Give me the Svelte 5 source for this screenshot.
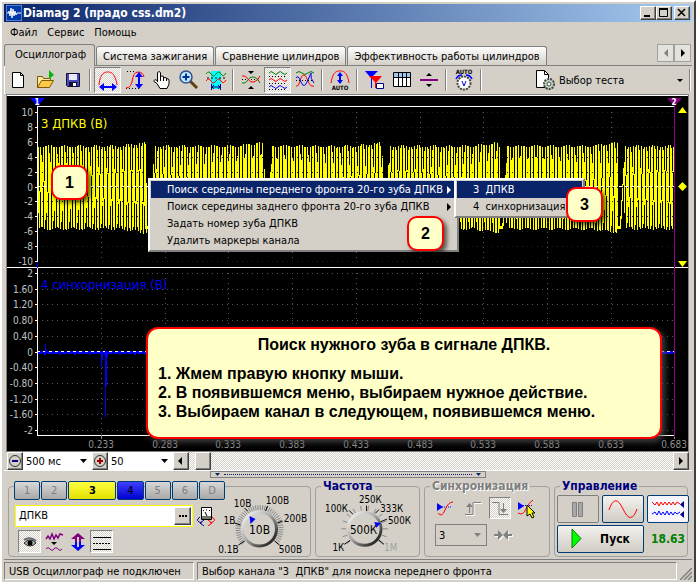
<script>
  const tabs = ['Осциллограф', 'Система зажигания', 'Сравнение цилиндров', 'Эффективность работы цилиндров'];
  let activeTab = $state(0);

  const channels = [
    { id: '1' },
    { id: '2' },
    { id: '3', kind: 'yellow' },
    { id: '4', kind: 'blue' },
    { id: '5' },
    { id: '6' },
    { id: 'D' }
  ];

  const menuItems = [
    { text: 'Поиск середины переднего фронта 20-го зуба ДПКВ', sub: true, active: true },
    { text: 'Поиск середины заднего фронта 20-го зуба ДПКВ', sub: true },
    { text: 'Задать номер зуба ДПКВ' },
    { text: 'Удалить маркеры канала' }
  ];
  const subItems = [{ text: '3  ДПКВ', active: true }, { text: '4  синхорнизация' }];

  let channelName = $state('ДПКВ');
  let volts = $state(2);
  let freq = $state(4);

  // plot geometry
  const left = 37;
  const right = 674;
  const times = ['0.233', '0.283', '0.333', '0.383', '0.433', '0.483', '0.533', '0.583', '0.633', '0.683'];
  const timeX = (i) => Math.round(101 + i * 63.7);

  const axis1 = [10, 8, 6, 4, 2, 0, -2, -4, -6, -8, -10].map((v, i) => ({ v, y: Math.round(112 + i * 14.9) }));
  const axis2 = ['2', '1.60', '1.20', '0.80', '0.40', '0', '-0.40', '-0.80', '-1.20', '-1.60', '-2'].map((v, i) => ({
    v,
    y: Math.round(273 + i * 15.7)
  }));

  // crankshaft sensor: dense teeth with a gap every 117.6 px
  function crank(x) {
    const p = (((x - 147) % 117.6) + 117.6) % 117.6;
    if (p < 3) return -1;
    if (p < 7) return -1 + (p - 3) * 0.4;
    const amp = 1 + (p > 90 ? (p - 90) / 300 : 0) + 0.03 * Math.sin(p * 0.4);
    return amp * Math.sin((2 * Math.PI * x) / 2.67);
  }

  let crankPath = '';
  for (let x = left + 1; x < right; x++) {
    let min = 2;
    let max = -2;
    for (let s = 0; s <= 8; s++) {
      const v = crank(x + s / 8);
      min = Math.min(min, v);
      max = Math.max(max, v);
    }
    crankPath += `M${x + 0.5} ${Math.round(186 - max * 40)}V${Math.round(187 - min * 42)}`;
  }

  let syncPath = 'M37 352';
  for (let x = 38; x <= right; x++) {
    syncPath += `L${x} ${352 + ((x * 7) % 3 === 0 ? 1 : 0) + (x % 5 === 0 ? 1 : 0)}`;
  }

  // knob ticks around a centre
  function ticks(cx, cy, r1, r2, step) {
    let d = '';
    for (let a = -220; a <= 40; a += step) {
      const t = (a * Math.PI) / 180;
      d += `M${cx + r1 * Math.cos(t)} ${cy + r1 * Math.sin(t)}L${cx + r2 * Math.cos(t)} ${cy + r2 * Math.sin(t)}`;
    }
    return d;
  }
</script>

<div class="window">
  <header class="titlebar">
    <svg class="logo" viewBox="0 0 16 16" width="16" height="16">
      <rect width="16" height="16" fill="#0038a8" stroke="#9cc4f8" />
      <path d="M1 8h2v-2l1 5 1-8 1 10 1-9 1 7 1-5 1 4 1-2h4" fill="none" stroke="#fff" />
    </svg>
    <h1>Diamag 2 (прадо css.dm2)</h1>
    <button class="win" aria-label="Свернуть"><svg viewBox="0 0 12 10" width="12" height="10"><path d="M2 8h6" stroke="#000" stroke-width="2" /></svg></button>
    <button class="win" aria-label="Развернуть"><svg viewBox="0 0 12 10" width="12" height="10"><path d="M1.500 1v7.500h8V1M1 1h9" fill="none" stroke="#000" /><path d="M1 1h9" stroke="#000" stroke-width="2" /></svg></button>
    <button class="win close" aria-label="Закрыть"><svg viewBox="0 0 12 10" width="12" height="10"><path d="M2 1l7 7M9 1l-7 7" stroke="#000" stroke-width="1.600" /></svg></button>
  </header>

  <nav class="menubar">
    <button>Файл</button>
    <button>Сервис</button>
    <button>Помощь</button>
  </nav>

  <div class="tabs">
    {#each tabs as tab, i}
      <button class="tab" class:active={activeTab === i} onclick={() => (activeTab = i)}>{tab}</button>
    {/each}
    <span class="fill"></span>
    <div class="tab-nav">
      <button aria-label="Назад"><svg viewBox="0 0 8 8" width="8" height="8"><path d="M6 0v8L2 4z" fill="#808080" /></svg></button>
      <button aria-label="Вперёд"><svg viewBox="0 0 8 8" width="8" height="8"><path d="M2 0v8l4-4z" /></svg></button>
    </div>
  </div>

  <div class="toolbar">
    <button aria-label="Новый"><svg viewBox="0 0 24 24"><path d="M5.500 4.500h8l3 3v12h-11z" fill="#fff" stroke="#000" /><path d="M13.500 4.500v3h3" fill="none" stroke="#000" /></svg></button>
    <button aria-label="Открыть"><svg viewBox="0 0 24 24"><path d="M3.500 19.500v-11h5l1 2h7v3" fill="#ffe9a0" stroke="#7a5a00" /><path d="M3.500 19.500l4-7h12l-4 7z" fill="#ffc84a" stroke="#7a5a00" /><path d="M15 2v9l5-4z" fill="#00b800" /></svg></button>
    <button aria-label="Сохранить"><svg viewBox="0 0 24 24"><path d="M5.500 5.500h13v13h-12l-1-1z" fill="#4848b8" stroke="#101040" /><path d="M8 6h8v6H8z" fill="#e8e8f8" /><path d="M8 14h8v4H8z" fill="#101030" /><path d="M12 15h3v3h-3z" fill="#fff" /></svg></button>
    <span class="sep"></span>
    <button class="pressed" aria-label="Период"><svg viewBox="0 0 24 24"><path d="M3 17C4 4 10 4 12 4s7 0 9 13" fill="none" stroke="red" /><path d="M6 19h12" stroke="#00f" stroke-width="2" /><path d="M3 19l5-4v8zM21 19l-5-4v8z" fill="#00f" /></svg></button>
    <button aria-label="Размах"><svg viewBox="0 0 24 24"><path d="M4 3.500h9M3 20.500h13" stroke="#000" stroke-dasharray="1 2" /><path d="M3 20c9 0 4-16 12-16q5 0 6 5" fill="none" stroke="red" /><path d="M16 6v12" stroke="#00f" stroke-width="2" /><path d="M16 4l-4 5h8zM16 21l-4-5h8z" fill="#00f" /></svg></button>
    <button aria-label="Рука"><svg viewBox="0 0 24 24"><path d="M7.500 14V4.500q1.500-2 3 0V10V8.500q1.500-1 3 0V10q1.500-1 3 0v1q2-1 2.500 1v4l-2 4.500h-7l-3-5-3-2q0-3 3-1" fill="#fff" stroke="#000" /><path d="M10.500 10v3M13.500 10v3M16.500 11v2" stroke="#000" /></svg></button>
    <button aria-label="Масштаб"><svg viewBox="0 0 24 24"><path d="M13 13l7 7" stroke="#604010" stroke-width="3" /><circle cx="9" cy="9" r="6" fill="#c0e8ff" stroke="#305090" stroke-width="1.500" /><path d="M5.500 9h7M9 5.500v7" stroke="#003090" stroke-width="2" /></svg></button>
    <button aria-label="Участок"><svg viewBox="0 0 24 24"><path d="M7 3h10v18H7z" fill="#0ff" /><path d="M2 6q3-4 5 0t5 0 5 0 5-1" fill="none" stroke="#008000" /><path d="M3 10h18" stroke="#000" stroke-dasharray="2 2" /><path d="M2 13q3-4 5 0t5 0 5 0 5-1" fill="none" stroke="red" /><path d="M7.500 16v6M16.500 16v6M8 19h8M10 17l-2 2 2 2M14 17l2 2-2 2" fill="none" stroke="#008" /></svg></button>
    <span class="sep"></span>
    <button aria-label="Центр"><svg viewBox="0 0 24 24"><path d="M3 11.500h18" stroke="#000" stroke-dasharray="1 2" /><path d="M3 15q4 1 6-3t6-3 6 6" fill="none" stroke="#008000" /><path d="M3 8q4-1 6 3t6 3 6-6" fill="none" stroke="red" /><path d="M9 3h6l-3 3zM9 21h6l-3-3z" /></svg></button>
    <button class="pressed" aria-label="Раздельно"><svg viewBox="0 0 24 24"><path d="M3 5q2-3 4.500 0t4.500 0 4.500 0 4.500 0" fill="none" stroke="#008000" /><path d="M3 8.500h18M3 15.500h18M3 21.500h18" stroke="#000" stroke-dasharray="1 2" /><path d="M3 12q2-3 4.500 0t4.500 0 4.500 0 4.500 0" fill="none" stroke="red" /><path d="M3 19q2-3 4.500 0t4.500 0 4.500 0 4.500 0" fill="none" stroke="#00f" /></svg></button>
    <button aria-label="Вместе"><svg viewBox="0 0 24 24"><path d="M3 5q3-3 6 0t6 0 6 0" fill="none" stroke="#008000" /><path d="M3 18C7 20 7 6 11 7s4 13 10 11" fill="none" stroke="red" /><path d="M3 10q2-4 5 4t7-2 3-6 3 9" fill="none" stroke="#00f" /><path d="M3 12.500h18" stroke="#000" stroke-dasharray="1 2" /></svg></button>
    <span class="sep"></span>
    <button aria-label="Авто"><svg viewBox="0 0 24 24"><path d="M3 15C5 3 9 3 12 3s7 0 9 12" fill="none" stroke="red" /><path d="M12 7v7" stroke="#00f" stroke-width="2" /><path d="M12 4l-3 4h6zM12 16l-3-4h6z" fill="#00f" /><text x="12" y="22" class="auto">AUTO</text></svg></button>
    <span class="sep"></span>
    <button aria-label="Маркеры"><svg viewBox="0 0 24 24"><path d="M2 3h13L8 10z" fill="#00f" /><path d="M8.500 8v12" stroke="#00f" /><path d="M12.500 13v7" stroke="red" /><path d="M6 8h13l-6 7z" fill="red" /><path d="M13.500 15.500h7v5h-7z" fill="#fff" stroke="#008" /></svg></button>
    <button aria-label="Таблица"><svg viewBox="0 0 24 24"><path d="M3.500 4.500h17v14h-17z" fill="#fff" stroke="#000" /><path d="M4 5h16v4H4z" fill="#a0c8f0" /><path d="M3 9.500h18M8.500 5v14M12.500 5v14M16.500 5v14" stroke="#000" /></svg></button>
    <button aria-label="Линия"><svg viewBox="0 0 24 24"><path d="M3 12h18" stroke="#800080" stroke-width="2" /><path d="M9 8l3-3 3 3zM9 16l3 3 3-3z" /></svg></button>
    <span class="sep"></span>
    <button aria-label="Автонапряжение"><svg viewBox="0 0 24 24"><text x="12" y="6" class="auto">AUTO</text><circle cx="12" cy="15" r="6.500" fill="#fff" stroke="#444" stroke-width="2" stroke-dasharray="2 1" /><path d="M10 13l2 5 2-5" fill="none" stroke="#00f" /><path d="M4 11q2-4 6-4M20 11q-2-4-6-4" fill="none" stroke="#00f" stroke-width="1.500" /></svg></button>
    <span class="sep"></span>
    <span class="fill"></span>
    <button class="test">
      <svg viewBox="0 0 24 24"><path d="M3.500 2.500h8l4 4v13h-12z" fill="#fff" stroke="#000" /><path d="M11.500 2.500v4h4" fill="none" stroke="#000" /><circle cx="16" cy="16" r="5" fill="#c8d8c8" stroke="#404840" stroke-width="2" stroke-dasharray="2 1" /><circle cx="16" cy="16" r="2" fill="#fff" stroke="#404840" /></svg>
      <span>Выбор теста</span>
      <svg class="tri" viewBox="0 0 6 3" width="6" height="3"><path d="M0 0h6L3 3z" /></svg>
    </button>
    <span class="sep end"></span>
  </div>

  <main class="scope">
    <svg class="plot" viewBox="7 96 681 355" role="img" aria-label="Осциллограмма">
      <g class="grid">
        {#each [...axis1, ...axis2] as a}
          <path d="M42 {a.y + 0.5}H{right}" />
        {/each}
        {#each times as t, i}
          <path d="M{timeX(i) + 0.5} 112V262M{timeX(i) + 0.5} 273V435" />
        {/each}
      </g>
      <path class="crisp" d={crankPath} stroke="#ff0" fill="none" />
      <g class="grid over">
        {#each axis1 as a}
          <path d="M42 {a.y + 0.5}H{right}" />
        {/each}
      </g>
      <path class="crisp" d="M37 186.500H674M37 351.500H674" stroke="#fff" stroke-dasharray="3 3" />
      <path class="crisp" d={syncPath} stroke="#00f" stroke-width="2" fill="none" />
      <path class="crisp" d="M37 351.500H674" stroke="#fff" stroke-dasharray="3 3" />
      <path class="crisp" d="M45.500 344v9M44.500 349h2v4M101.500 352v15M102.500 352v8M105.500 350v67M106.500 352v34M107.500 352v5" stroke="#00f" fill="none" />
      <path class="crisp" d="M37 106.500H675M7 267.500H688M37 435.500H674M37.500 106V262M37.500 268V436" stroke="#fff" />
      <g class="labels">
        {#each axis1 as a}
          <text x="33" y={a.y + 4}>{a.v}</text>
          <path class="crisp" d="M35 {a.y + 0.5}h3" stroke="#fff" />
        {/each}
        {#each axis2 as a}
          <text x="33" y={a.y + 4}>{a.v}</text>
          <path class="crisp" d="M35 {a.y + 0.5}h3" stroke="#fff" />
        {/each}
      </g>
      {#each times as t, i}
        <text class="time" x={timeX(i)} y="448">{t}</text>
        <path class="crisp" d="M{timeX(i) + 0.5} 435v4" stroke="#888" />
      {/each}
      <path class="crisp" d="M37.500 100v6M37.500 262v6" stroke="#00f" />
      <path d="M30 98h15l-7.500 8z" fill="#00f" />
      <path class="crisp" d="M674.500 100V437" stroke="#900090" />
      <path d="M667 98h15l-7.500 8z" fill="#800080" />
      <text class="flag" x="37" y="105">1</text>
      <text class="flag" x="674" y="105">2</text>
      <path d="M678 113h9l-4.500-6zM678 261h9l-4.500 6zM682.500 182l4.500 4.500-4.500 4.500-4.500-4.500z" fill="#ff0" />
      <text class="name" x="41" y="128" fill="#ff0">3 ДПКВ (В)</text>
      <text class="name" x="41" y="289" fill="#00f">4 синхорнизация (В)</text>
    </svg>

    <ul class="context">
      {#each menuItems as item}
        <li>
          <button class:active={item.active}>
            <span>{item.text}</span>
            {#if item.sub}<svg viewBox="0 0 5 8" width="5" height="8"><path d="M0 0v8l4-4z" fill="currentColor" /></svg>{/if}
          </button>
        </li>
      {/each}
    </ul>
    <ul class="context submenu">
      {#each subItems as item}
        <li><button class:active={item.active}><span>{item.text}</span></button></li>
      {/each}
    </ul>

    <span class="badge one">1</span>
    <span class="badge two">2</span>
    <span class="badge three">3</span>

    <section class="note">
      <h2>Поиск нужного зуба в сигнале ДПКВ.</h2>
      <ol>
        <li>Жмем правую кнопку мыши.</li>
        <li>В появившемся меню, выбираем нужное действие.</li>
        <li>Выбираем канал в следующем, появившемся меню.</li>
      </ol>
    </section>
  </main>

  <div class="scrollrow">
    <button class="raised" aria-label="Меньше"><svg viewBox="0 0 14 14" width="14" height="14"><circle cx="7" cy="7" r="5.500" fill="none" stroke="#333" /><path d="M4 7h6" stroke="#000080" stroke-width="2" /></svg></button>
    <label class="combo"><select aria-label="Развёртка"><option>500 мс</option></select><svg viewBox="0 0 7 4" width="7" height="4"><path d="M0 0h7L3.500 4z" /></svg></label>
    <button class="raised" aria-label="Больше"><svg viewBox="0 0 14 14" width="14" height="14"><circle cx="7" cy="7" r="5.500" fill="none" stroke="#333" /><path d="M4 7h6M7 4v6" stroke="#a00000" stroke-width="2" /></svg></button>
    <label class="combo narrow"><select aria-label="Шаг"><option>50</option></select><svg viewBox="0 0 7 4" width="7" height="4"><path d="M0 0h7L3.500 4z" /></svg></label>
    <button class="raised" aria-label="Влево"><svg viewBox="0 0 8 8" width="8" height="8"><path d="M5 0v8L1 4z" /></svg></button>
    <div class="track"><span class="thumb"></span></div>
    <button class="raised" aria-label="Вправо"><svg viewBox="0 0 8 8" width="8" height="8"><path d="M2 0v8l4-4z" /></svg></button>
  </div>

  <div class="splitter">
    <button aria-label="Скрыть панель">
      <svg viewBox="0 0 5 3" width="5" height="3"><path d="M0 0h5L2.500 3z" fill="#0a246a" /></svg>
      <span class="dots"></span>
      <svg viewBox="0 0 5 3" width="5" height="3"><path d="M0 0h5L2.500 3z" fill="#0a246a" /></svg>
    </button>
  </div>

  <div class="panel">
    <section class="group channel">
      <div class="channels">
        {#each channels as ch}
          <button class={['ch', ch.kind]}>{ch.id}</button>
        {/each}
      </div>
      <div class="name-row">
        <div class="name-box">
          <input aria-label="Имя канала" bind:value={channelName} />
          <button class="raised" aria-label="Ещё"><svg viewBox="0 0 8 2" width="8" height="2"><path d="M0 1h2M3 1h2M6 1h2" stroke="#000" stroke-width="2" /></svg></button>
        </div>
        <button class="icon" aria-label="Прибор"><svg viewBox="0 0 20 20" width="20" height="20"><path d="M5.500 1.500h10v12h-10z" fill="#fff" stroke="#000" /><path d="M6 10h9v3H6z" fill="#707870" /><path d="M7 5l1-1M10 4h1M13 4l1 1M9 6l2 4" stroke="#000" /><path d="M4 11q-6 4 2 6M8 14l-4 3 4 3" fill="none" stroke="#008" /><path d="M16 11q6 4-2 6M12 14l4 3-4 3" fill="none" stroke="red" /></svg></button>
      </div>
      <div class="view-row">
        <button class="pressed" aria-label="Показать"><svg viewBox="0 0 22 22" width="22" height="22"><path d="M5 12q6-6 12 0-6 6-12 0z" fill="#b8c0b8" stroke="#222" /><circle cx="11" cy="12" r="2.500" /><path d="M5 9q6-4 12 1" fill="none" stroke="#667" stroke-width="2" /></svg></button>
        <button aria-label="Фильтр"><svg viewBox="0 0 22 22" width="22" height="22"><path d="M3 8l2-3 2 3 2-5 2 5 2-4 2 3 2-4 3 1" fill="none" stroke="#800080" stroke-width="1.500" /><path d="M8 11h6l-3 3z" /><path d="M3 18q2-3 4 0t4 0 4 0 4 0" fill="none" stroke="#800080" /></svg></button>
        <button aria-label="Инверсия"><svg viewBox="0 0 22 22" width="22" height="22"><path d="M11 2l7 6h-4v3H8V8H4z" fill="#800080" /><path d="M11 20l7-6h-4v-3H8v3H4z" fill="#00f" /><path d="M11 6v10" stroke="#d4d0c8" stroke-width="2" /></svg></button>
        <button class="pressed" aria-label="Уровни"><svg viewBox="0 0 22 22" width="22" height="22"><path d="M2 6.500h18M2 18.500h18" stroke="#000" /><path d="M2 12.500h18" stroke="#000" stroke-dasharray="2 1" /></svg></button>
      </div>
      <label class="knob">
        <input type="range" min="0" max="5" bind:value={volts} aria-label="Вольты" />
        <svg viewBox="218 494 90 62">
          <path d={ticks(260, 529, 19, 24, 6)} stroke="#888" />
          <path d="M245 541l-6 4M241 525l-6-2M248 511l-3-3M266 511l2-5M278 523l5-2M275 541l5 4" stroke="#000" />
          <circle cx="260" cy="529" r="17" fill="#d4d0c8" stroke="url(#rim)" stroke-width="3" />
          <path d="M250 516l6 3-5 5z" fill="#00f" />
          <text class="center" x="260" y="534">10В</text>
          <g class="scale">
            <text x="243" y="507">10В</text>
            <text x="278" y="504">100В</text>
            <text x="296" y="522">200В</text>
            <text x="291" y="553">500В</text>
            <text x="229" y="553">0.1В</text>
            <text x="230" y="524">1В</text>
          </g>
        </svg>
      </label>
    </section>

    <fieldset class="group">
      <legend>Частота</legend>
      <label class="knob">
        <input type="range" min="0" max="5" bind:value={freq} aria-label="Частота" />
        <svg viewBox="318 491 98 64">
          <defs>
            <linearGradient id="rim" x1="0" y1="0" x2="1" y2="1">
              <stop offset="0" stop-color="#fff" />
              <stop offset="0.450" stop-color="#aaa" />
              <stop offset="1" stop-color="#000" />
            </linearGradient>
          </defs>
          <path d={ticks(364, 529, 19, 24, 20)} stroke="#888" />
          <path d="M349 541l-6 4M352 514l-4-4M366 511v-6M375 513l4-4M380 522l7-3M378 540l6 5" stroke="#000" />
          <circle cx="364" cy="529" r="17" fill="#d4d0c8" stroke="url(#rim)" stroke-width="3" />
          <path d="M374 522l7 1-5 5z" fill="#00f" />
          <text class="center" x="363" y="534">500К</text>
          <g class="scale">
            <text x="335" y="512">100К</text>
            <text x="370" y="502">250К</text>
            <text x="392" y="512">333К</text>
            <text x="400" y="524">500К</text>
            <text x="391" y="552" class="dim">1М</text>
            <text x="337" y="552">1К</text>
          </g>
        </svg>
      </label>
    </fieldset>

    <fieldset class="group sync">
      <legend>Синхронизация</legend>
      <div class="row">
        <button class="icon" aria-label="Уровень"><svg viewBox="0 0 22 22" width="22" height="22"><path d="M2 6v8l6-4z" fill="#00f" /><path d="M7 10h9" stroke="#00f" stroke-dasharray="1 1" /><path d="M3 16q4 5 7-3t8-8" fill="none" stroke="red" /></svg></button>
        <button class="icon" aria-label="Передний фронт"><svg viewBox="0 0 22 22" width="22" height="22"><path d="M3 17.500h8v-12h8" fill="none" stroke="#fff" transform="translate(1 1)" /><path d="M3 17.500h8v-12h8M7.500 16V8" fill="none" stroke="#808080" /><path d="M4 10h7L7.500 6z" fill="#808080" /></svg></button>
        <button class="icon pressed" aria-label="Задний фронт"><svg viewBox="0 0 22 22" width="22" height="22"><path d="M3 5.500h7v12h9M14.500 6v8" fill="none" stroke="#808080" /><path d="M11 12h7l-3.500 4z" fill="#808080" /></svg></button>
        <button class="icon" aria-label="Указать"><svg viewBox="0 0 22 22" width="22" height="22"><path d="M2 5v8l6-4z" fill="#00f" /><path d="M7 8.500h10" stroke="#00f" stroke-dasharray="1 1" /><path d="M2 16q5 3 8-4t7-9" fill="none" stroke="red" /><path d="M11 8v11l3-2 2 4 2-1-2-4h3z" fill="#ff0" stroke="#000" /></svg></button>
      </div>
      <div class="row second">
        <label class="combo disabled"><select aria-label="Канал" disabled><option>3</option></select><svg viewBox="0 0 7 4" width="7" height="4"><path d="M0 0h7L3.500 4z" fill="#808080" /></svg></label>
        <button class="icon" aria-label="Сжать"><svg viewBox="0 0 20 12" width="20" height="12"><path d="M1 5h4V1l5 5 5-5v4h4v2h-4v4l-5-5-5 5V7H1z" fill="#fff" transform="translate(1 1)" /><path d="M1 5h4V1l5 5 5-5v4h4v2h-4v4l-5-5-5 5V7H1z" fill="#808080" /></svg></button>
      </div>
    </fieldset>

    <fieldset class="group control">
      <legend>Управление</legend>
      <button class="big off" aria-label="Пауза"><svg viewBox="0 0 40 26"><path d="M14.500 6.500h4v14h-4zM20.500 6.500h4v14h-4z" fill="#a8a8a8" stroke="#808080" /></svg></button>
      <button class="big" aria-label="Синус"><svg viewBox="0 0 40 26"><path d="M6 14Q12-4 20 13T34 13" fill="none" stroke="red" /></svg></button>
      <button class="big on" aria-label="Сигналы"><svg viewBox="0 0 40 26"><path d="M4 6l3 3 2-3 2 4 2-4 2 3 2-3 2 3 2-3 2 3 2-3 2 3 2-3 3 2" fill="none" stroke="red" /><path d="M4 18l3-2 2 3 2-4 2 4 2-3 2 3 2-4 2 4 2-3 2 3 2-3 2 2 3-2" fill="none" stroke="#00f" /><path d="M36 5v7l-4-3.500zM36 15v7l-4-3.500z" fill="#008" /></svg></button>
      <button class="big start"><svg viewBox="0 0 11 20" width="11" height="20"><path d="M1 0v19l9-9.500z" fill="#0f0" stroke="#008000" /></svg><span>Пуск</span></button>
      <output>18.63</output>
    </fieldset>
  </div>

  <footer class="status">
    <span>USB Осциллограф не подключен</span>
    <span class="wide">Выбор канала "3&nbsp; ДПКВ" для поиска переднего фронта</span>
    <svg viewBox="0 0 12 12" width="12" height="12"><path d="M0 12L12 0M4 12l8-8M8 12l4-4" stroke="#808080" stroke-width="1.500" /></svg>
  </footer>
</div>

<style>
  :global(body) {
    background: #d4d0c8;
  }

  .window {
    --dither: repeating-conic-gradient(#fff 0 25%, #d4d0c8 0 50%);
    box-sizing: border-box;
    min-height: 100vh;
    display: flex;
    flex-direction: column;
    padding: 2px;
    border: 2px solid;
    border-color: #fff #404040 #404040 #fff;
    background: #d4d0c8;
    color: #000;
    font: 11px/13px 'DejaVu Sans Condensed', 'DejaVu Sans', 'Liberation Sans', sans-serif;
  }

  button,
  input,
  select {
    font: inherit;
    color: inherit;
    margin: 0;
    padding: 0;
    border: 0;
    border-radius: 0;
    background: none;
    box-sizing: border-box;
  }

  button {
    display: flex;
    align-items: center;
    justify-content: center;
  }

  svg {
    display: block;
    flex: none;
  }

  .crisp,
  .grid path {
    shape-rendering: crispEdges;
  }

  .fill {
    flex: 1;
  }

  .raised,
  .win,
  .thumb {
    background: #d4d0c8;
    border: 1px solid;
    border-color: #fff #404040 #404040 #fff;
    box-shadow: inset -1px -1px #808080;
  }

  .pressed {
    border: 1px solid;
    border-color: #808080 #fff #fff #808080;
    background: var(--dither) 0 0 / 2px 2px;
  }

  .titlebar {
    display: flex;
    align-items: center;
    height: 18px;
    padding: 0 2px;
    background: linear-gradient(90deg, #0a246a, #a6caf0);
    color: #fff;
  }

  .titlebar h1 {
    flex: 1;
    margin: 0 0 0 1px;
    font-size: 12px;
    font-weight: bold;
  }

  .win {
    width: 16px;
    height: 14px;
  }

  .close {
    margin-left: 2px;
  }

  .menubar {
    display: flex;
    gap: 10px;
    height: 22px;
    padding: 0 6px;
  }

  .menubar button {
    height: 20px;
  }

  .tabs {
    display: flex;
    align-items: flex-end;
    height: 21px;
    padding-right: 1px;
    border-bottom: 1px solid #808080;
  }

  .tab {
    height: 19px;
    margin-right: 1px;
    padding: 0 6px;
    border: 1px solid #808080;
    border-bottom: 0;
    border-radius: 3px 3px 0 0;
    background: linear-gradient(#fff, #d4d0c8);
  }

  .tab.active {
    height: 22px;
    margin-bottom: -1px;
    padding: 0 8px 2px 10px;
    background: #d4d0c8;
  }

  .tab-nav {
    display: flex;
    align-self: flex-start;
  }

  .tab-nav button {
    width: 17px;
    height: 18px;
    border: 1px solid #a0a0a0;
    background: #e4e2dc;
  }

  .toolbar {
    display: flex;
    align-items: center;
    height: 28px;
    padding-right: 1px;
    border-left: 1px solid #fff;
  }

  .toolbar button {
    width: 27px;
    height: 26px;
  }

  .toolbar svg {
    width: 24px;
    height: 24px;
  }

  .sep {
    width: 2px;
    height: 22px;
    margin: 0 3px;
    box-sizing: border-box;
    border-left: 1px solid #808080;
    border-right: 1px solid #fff;
  }

  .end {
    margin: 0;
  }

  .auto {
    font: bold 6px 'DejaVu Sans Condensed', sans-serif;
    text-anchor: middle;
  }

  .toolbar .test {
    width: 156px;
    justify-content: flex-start;
    gap: 2px;
  }

  .toolbar .test .tri {
    width: 6px;
    height: 3px;
    margin: 0 6px 0 auto;
  }

  .scope {
    position: relative;
    border: 1px solid #fff;
    border-top-width: 2px;
    outline: 1px solid #808080;
    outline-offset: -1px;
    margin: 0 3px 0 2px;
    background: #000;
  }

  .plot {
    width: 100%;
    height: auto;
    background: #000;
  }

  .grid path {
    stroke: #555;
    stroke-dasharray: 1 4;
    fill: none;
  }

  .grid.over path {
    stroke: #222;
  }

  .labels text {
    fill: #c0c0c0;
    font-size: 10px;
    text-anchor: end;
  }

  .time {
    fill: #909090;
    font-size: 10px;
    text-anchor: middle;
  }

  .flag {
    fill: #fff;
    font-size: 8px;
    font-weight: bold;
    text-anchor: middle;
  }

  .name {
    font-size: 13px;
  }

  .context {
    position: absolute;
    left: 141px;
    top: 82px;
    margin: 0;
    padding: 1px;
    list-style: none;
    background: #d4d0c8;
    border: 2px solid;
    border-color: #fff #808080 #808080 #fff;
    width: 305px;
  }

  .context button {
    width: 100%;
    height: 17px;
    justify-content: space-between;
    padding: 0 4px 0 16px;
    white-space: pre;
  }

  .context .active {
    background: #0a246a;
    color: #fff;
  }

  .submenu {
    left: 447px;
    width: 125px;
  }

  .badge {
    position: absolute;
    box-sizing: border-box;
    width: 37px;
    height: 35px;
    border: 2px solid #f00;
    border-radius: 10px;
    background: #ffffc8;
    box-shadow: 3px 3px 4px rgba(0, 0, 0, 0.6);
    font: bold 16px/31px 'Liberation Sans', Arial, sans-serif;
    text-align: center;
  }

  .one {
    left: 44px;
    top: 69px;
  }

  .two {
    left: 400px;
    top: 120px;
  }

  .three {
    left: 559px;
    top: 91px;
  }

  .note {
    position: absolute;
    left: 139px;
    right: 26px;
    top: 231px;
    box-sizing: border-box;
    height: 112px;
    padding: 6px 10px;
    border: 2px solid #f00;
    border-radius: 12px;
    background: #ffffc8;
    box-shadow: 3px 3px 6px rgba(80, 80, 80, 0.8);
    font: bold 16px/19px 'Liberation Sans', Arial, sans-serif;
  }

  .note h2 {
    margin: 0 0 10px;
    font: inherit;
    text-align: center;
  }

  .note ol {
    margin: 0;
    padding: 0;
    list-style-position: inside;
  }

  .scrollrow {
    display: flex;
    height: 18px;
    margin: 0 3px;
  }

  .scrollrow .raised {
    width: 16px;
  }

  .combo {
    position: relative;
    display: flex;
    align-items: center;
    width: 69px;
    background: #fff;
  }

  .narrow {
    width: 65px;
  }

  .combo select {
    appearance: none;
    width: 100%;
    height: 100%;
    padding-left: 3px;
  }

  .combo svg {
    position: absolute;
    right: 5px;
    pointer-events: none;
  }

  .track {
    flex: 1;
    display: flex;
    padding-left: 6px;
    background: var(--dither) 0 0 / 2px 2px;
  }

  .thumb {
    box-sizing: border-box;
    width: 16px;
  }

  .splitter {
    display: flex;
    justify-content: center;
    height: 8px;
    border-top: 1px solid #fff;
  }

  .splitter button {
    width: 40%;
    height: 7px;
    padding: 0 4px;
    gap: 4px;
    border: 1px solid #808080;
  }

  .dots {
    flex: 1;
    border-top: 1px dotted #0a246a;
  }

  .panel {
    display: grid;
    grid-template-columns: 303fr 105fr 126fr 134fr;
    gap: 4px;
    height: 79px;
    padding: 1px 4px 0;
    border-bottom: 1px solid #808080;
  }

  .group {
    box-sizing: border-box;
    min-width: 0;
    margin: 0;
    padding: 0 2px;
    border: 1px solid #a0a0a0;
    border-radius: 4px;
  }

  fieldset {
    height: 77px;
  }

  legend {
    margin-left: 3px;
    padding: 0 2px;
    font-size: 12px;
    line-height: 12px;
    font-weight: bold;
    color: #000080;
  }

  .sync legend {
    color: #808080;
    text-shadow: 1px 1px #fff;
  }

  .channel {
    display: grid;
    grid-template-columns: 203px 1fr;
    grid-template-rows: 14px 29px 23px;
    height: 71px;
    margin-top: 6px;
    padding-left: 5px;
  }

  .channels {
    grid-area: 1 / 1 / 2 / 3;
    display: flex;
    gap: 1px;
    width: 211px;
    height: 19px;
    margin-top: -6px;
  }

  .ch {
    flex: 1;
    border: 1px solid #003c74;
    border-radius: 2px;
    background: linear-gradient(#d8d8d8, #a8a8a8);
    color: #808080;
  }

  .ch.yellow {
    flex: 0 0 48px;
    background: linear-gradient(#ffff40, #e0e000);
    color: #000;
    font-weight: bold;
  }

  .ch.blue {
    background: linear-gradient(#4040ff, #0000d0);
    color: #000;
  }

  .name-row {
    grid-area: 2 / 1;
    display: flex;
    align-items: center;
    gap: 3px;
    padding-left: 1px;
  }

  .name-box {
    display: flex;
    box-sizing: border-box;
    width: 178px;
    height: 22px;
    padding: 1px;
    border: 1px solid #ff0;
    background: #fff;
  }

  .name-box input {
    flex: 1;
    min-width: 0;
    padding-left: 2px;
  }

  .name-box button {
    width: 17px;
  }

  .view-row {
    grid-area: 3 / 1;
    display: flex;
    gap: 1px;
    padding-left: 4px;
  }

  .view-row button {
    width: 23px;
    height: 23px;
  }

  .knob {
    position: relative;
    display: block;
  }

  .channel .knob {
    grid-area: 1 / 2 / 4 / 3;
    margin-top: 7px;
  }

  .knob svg {
    width: 100%;
    height: 62px;
  }

  .knob input {
    position: absolute;
    inset: 12px 20px;
    width: auto;
    opacity: 0;
  }

  .scale text {
    font-size: 10px;
    text-anchor: middle;
  }

  .scale .dim {
    fill: #a0a0a0;
  }

  .center {
    font-size: 12px;
    text-anchor: middle;
  }

  .row {
    display: flex;
    align-items: center;
    gap: 5px;
    padding: 5px 7px 0 8px;
  }

  .row .icon {
    width: 22px;
    height: 22px;
  }

  .disabled {
    width: 52px;
    height: 22px;
    box-sizing: border-box;
    border: 1px solid #808080;
    background: none;
  }

  .disabled select {
    opacity: 1;
  }

  .control {
    display: grid;
    grid-template-columns: 1fr 1fr 1fr;
    grid-template-rows: 28px 28px;
    gap: 2px 3px;
    padding-top: 3px;
  }

  .big {
    border: 1px solid #003c74;
    border-radius: 2px;
    background: linear-gradient(#f4f2ee, #d0ccc4);
  }

  .big.off {
    border-color: #808080;
    background: #d4d0c8;
  }

  .big.on {
    background: #f4f6fc;
  }

  .big svg {
    height: 26px;
  }

  .start {
    grid-column: 1 / 3;
    gap: 18px;
    font-size: 12px;
    font-weight: bold;
  }

  .start svg {
    height: 20px;
  }

  output {
    align-self: center;
    text-align: center;
    color: #008000;
    font-size: 12px;
    font-weight: bold;
  }

  .status {
    display: flex;
    gap: 3px;
    height: 19px;
    margin-top: 1px;
    align-items: flex-end;
  }

  .status span {
    box-sizing: border-box;
    width: 190px;
    height: 18px;
    padding: 2px 4px;
    border: 1px solid;
    border-color: #808080 #fff #fff #808080;
    white-space: nowrap;
  }

  .status .wide {
    flex: 1;
  }
</style>
